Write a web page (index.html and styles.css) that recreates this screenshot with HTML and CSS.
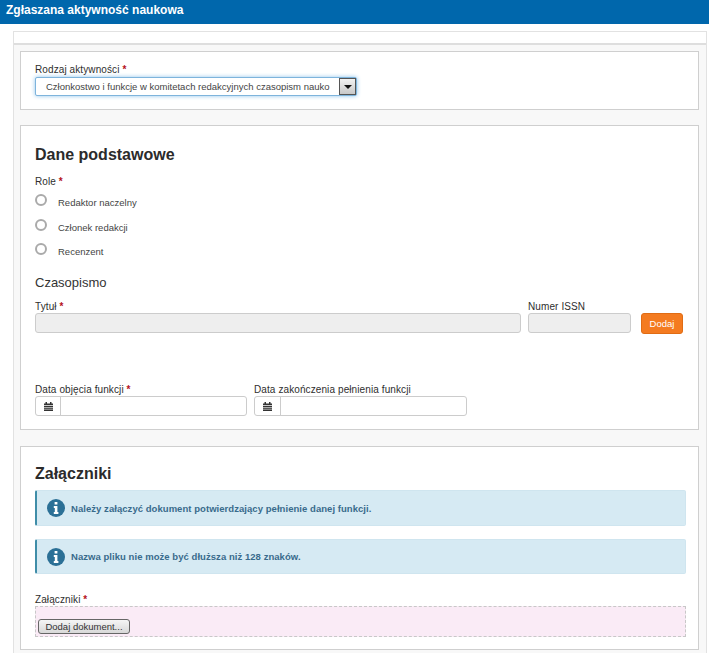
FILE: index.html
```html
<!DOCTYPE html>
<html lang="pl">
<head>
<meta charset="utf-8">
<title>Zgłaszana aktywność naukowa</title>
<link rel="stylesheet" href="styles.css">
</head>
<body>
<header class="topbar">Zgłaszana aktywność naukowa</header>
<main class="outer">
  <div class="outer-head"></div>
  <div class="outer-body">
    <section class="card card-type">
      <label class="label">Rodzaj aktywności <span class="req">*</span></label>
      <div class="select">
        <span class="select-text">Członkostwo i funkcje w komitetach redakcyjnych czasopism nauko</span>
        <span class="select-btn"><svg width="8" height="4" viewBox="0 0 8 4"><path d="M0 0h8L4 4z" fill="#111"/></svg></span>
      </div>
    </section>
    <section class="card card-basic">
      <h2 class="h-main">Dane podstawowe</h2>
      <label class="label label-role">Role <span class="req">*</span></label>
      <div class="radio-row"><span class="radio"></span><span class="radio-text">Redaktor naczelny</span></div>
      <div class="radio-row"><span class="radio"></span><span class="radio-text">Członek redakcji</span></div>
      <div class="radio-row"><span class="radio"></span><span class="radio-text">Recenzent</span></div>
      <h3 class="h-sub">Czasopismo</h3>
      <div class="journal">
        <div class="field field-title"><label class="label">Tytuł <span class="req">*</span></label><div class="input disabled"></div></div>
        <div class="field field-issn"><label class="label">Numer ISSN</label><div class="input disabled"></div></div>
        <button class="btn-add">Dodaj</button>
      </div>
      <div class="dates">
        <div class="field field-date"><label class="label">Data objęcia funkcji <span class="req">*</span></label>
          <div class="date"><span class="date-icon"><svg width="9" height="9" viewBox="0 0 9 9"><path d="M1.500 0h1.500v1.500H1.500zM6 0h1.500v1.500H6zM0 1.500h9V3H0zM0 3.800h9V9H0z" fill="#333"/><path d="M0 5.500h9M0 7.200h9" stroke="#fff" stroke-width=".6"/></svg></span><span class="date-input"></span></div></div>
        <div class="field field-date field-date-end"><label class="label">Data zakończenia pełnienia funkcji</label>
          <div class="date"><span class="date-icon"><svg width="9" height="9" viewBox="0 0 9 9"><path d="M1.500 0h1.500v1.500H1.500zM6 0h1.500v1.500H6zM0 1.500h9V3H0zM0 3.800h9V9H0z" fill="#333"/><path d="M0 5.500h9M0 7.200h9" stroke="#fff" stroke-width=".6"/></svg></span><span class="date-input"></span></div></div>
      </div>
    </section>
    <section class="card card-files">
      <h2 class="h-main">Załączniki</h2>
      <div class="alert"><svg class="alert-icon" width="18" height="18" viewBox="0 0 18 18"><circle cx="9" cy="9" r="9" fill="#2b7096"/><path d="M7.600 3h2.800v2.600H7.600zM6.800 7h3.600v6h1v2H6.800v-2h1V9h-1z" fill="#fff"/></svg><span>Należy załączyć dokument potwierdzający pełnienie danej funkcji.</span></div>
      <div class="alert"><svg class="alert-icon" width="18" height="18" viewBox="0 0 18 18"><circle cx="9" cy="9" r="9" fill="#2b7096"/><path d="M7.600 3h2.800v2.600H7.600zM6.800 7h3.600v6h1v2H6.800v-2h1V9h-1z" fill="#fff"/></svg><span>Nazwa pliku nie może być dłuższa niż 128 znaków.</span></div>
      <label class="label label-files">Załączniki <span class="req">*</span></label>
      <div class="dropzone"><button class="btn-file">Dodaj dokument...</button></div>
    </section>
  </div>
</main>
</body>
</html>
```
FILE: styles.css
```css
* { box-sizing: border-box; }
html, body { height: 653px; overflow: hidden; }
body { margin: 0; background: #fff; font-family: "Liberation Sans", Arial, sans-serif; color: #333; }
.topbar { height: 24px; background: #0067ac; color: #fff; font-size: 12px; font-weight: 700; line-height: 21px; padding-left: 6px; }
.outer { margin: 7px 2px 0 13px; border-left: 1px solid #e2e2e2; border-right: 1px solid #e2e2e2; border-top: 1px solid #e2e2e2; background: #f8f8f8; height: 640px; }
.outer-head { height: 13px; background: #fff; border-bottom: 2px solid #dedede; }
.outer-body { padding: 6px 7px 0 6px; display: flex; flex-direction: column; }
.card { background: #fff; border: 1px solid #cfcfcf; padding: 0 14px; }
.card-type { height: 59px; margin-bottom: 15px; padding-top: 12px; }
.card-basic { height: 305px; margin-bottom: 16px; padding-top: 19px; }
.card-files { height: 204px; padding: 17px 12px 0 14px; }
.label { display: block; font-size: 10px; line-height: 12px; color: #2e2e2e; letter-spacing: .1px; }
.req { color: #b5121b; font-weight: 700; }
.select { width: 322px; height: 19px; margin-top: 1px; display: flex; align-items: stretch; border: 1px solid #7eb4dc; border-radius: 2px; box-shadow: 0 0 4px #8fc4ec; background: #fff; }
.select-text { flex: 1; min-width: 0; white-space: nowrap; font-size: 9.500px; line-height: 17px; padding-left: 10px; color: #444; }
.select-btn { width: 17px; border: 1px solid #555; background: linear-gradient(#f2f2f2, #c8c8c8); display: flex; align-items: center; justify-content: center; }
.h-main { margin: 0; font-size: 16px; line-height: 20px; font-weight: 700; color: #2b2b2b; }
.label-role { margin-top: 11px; margin-bottom: 4px; }
.radio-row { height: 24.500px; display: flex; align-items: flex-start; }
.radio { width: 12px; height: 12px; border: 2px solid #aaa; border-radius: 50%; background: #fff; margin-top: 2px; }
.radio-text { font-size: 9.500px; line-height: 12px; margin-left: 11px; margin-top: 5px; color: #444; }
.h-sub { margin: 9.500px 0 0; font-size: 13px; line-height: 16px; font-weight: 400; color: #333; }
.journal { display: flex; margin-top: 10px; align-items: flex-start; }
.field-title { width: 486px; margin-right: 7px; }
.field-issn { width: 103px; margin-right: 10px; }
.input { height: 20px; border: 1px solid #ccc; border-radius: 3px; background: #eee; }
.btn-add { margin-top: 12px; width: 42px; height: 21px; padding: 0; background: #f47b20; border: 1px solid #e06c14; border-radius: 3px; color: #fff; font: 9.500px "Liberation Sans", Arial, sans-serif; }
.dates { display: flex; gap: 7px; margin-top: 50px; }
.field-date { width: 212px; }
.field-date-end { width: 213px; }
.date { display: flex; height: 20px; border: 1px solid #ccc; border-radius: 3px; background: #fff; }
.date-icon { width: 25px; border-right: 1px solid #ccc; display: flex; align-items: center; justify-content: center; }
.field-date-end .date-icon { width: 26px; }
.date-input { flex: 1; }
.alert { height: 36px; margin-top: 6px; margin-bottom: 13px; display: flex; align-items: center; background: #d6eaf3; border: 1px solid #cfe5ef; border-left: 2px solid #3f8da8; border-radius: 2px; color: #396b8c; font-size: 9.500px; font-weight: 700; letter-spacing: .05px; padding-left: 10px; }
.alert-icon { margin-right: 6px; flex: none; }
.alert + .alert { height: 35px; margin-top: 0; margin-bottom: 20px; }
.dropzone { height: 31px; background: #faebf6; border: 1px dashed #c8c8c8; padding: 12px 2px 0; }
.btn-file { display: block; width: 92px; height: 15px; padding: 0; border: 1px solid #666; border-radius: 3px; background: linear-gradient(#f5f5f5, #d8d8d8); font: 9.500px/13px "Liberation Sans", Arial, sans-serif; color: #333; }
```
